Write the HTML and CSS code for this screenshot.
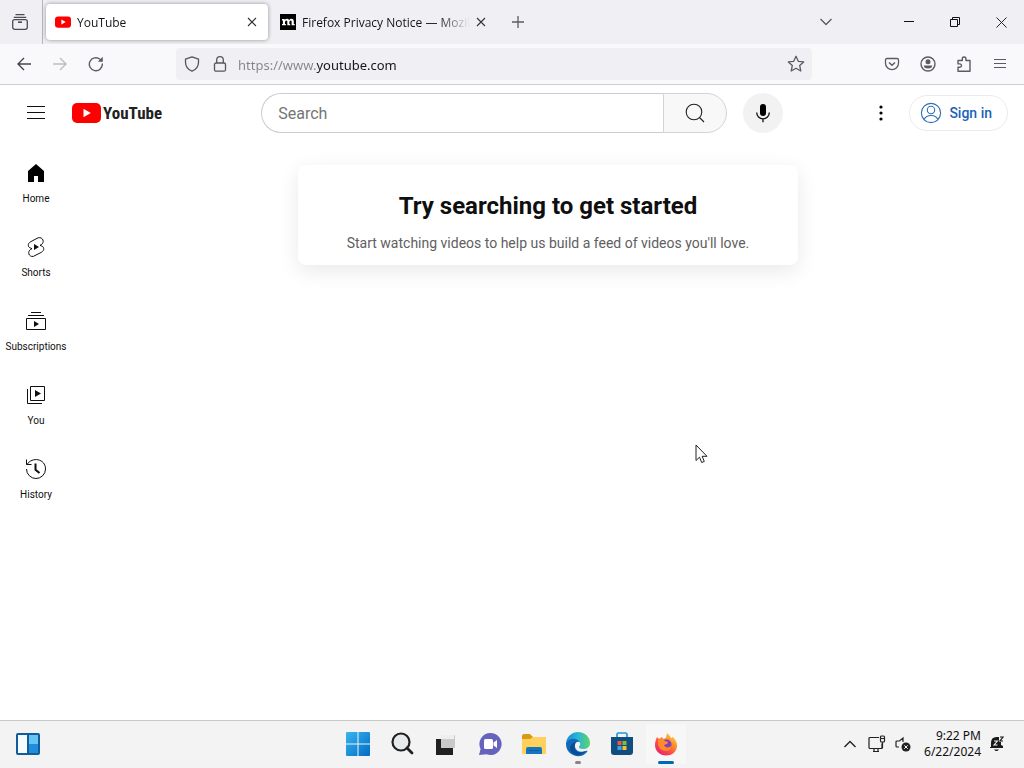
FILE: index.html
```html
<!DOCTYPE html>
<html lang="en">
  <head>
    <title>YouTube</title>
    <meta charset="utf-8">
    <link rel="stylesheet" href="styles.css">
  </head>
  <body>
    <!-- browser tabs -->
    <div class="tabbar">
      <button class="view-btn" aria-label="Firefox View">
        <svg width="16" height="16" viewBox="0 0 16 16" fill="none" stroke="#4b4a57" stroke-width="1.3"><path d="M3.5 .7h9M1.8 3.3h12.4"/><rect x=".7" y="5.7" width="14.6" height="9.6" rx="2"/><path d="M6 8.2h4" stroke-width="1.6"/></svg>
      </button>
      <div class="tab tab-active">
        <svg width="16" height="16" viewBox="0 0 16 16"><rect y="2.4" width="16" height="11.4" rx="3" fill="#f00"/><path d="M6.4 5.6v5l4.3-2.5z" fill="#fff"/></svg>
        <span class="tab-title">YouTube</span>
        <button class="tab-close" aria-label="Close tab"><svg width="10" height="10" viewBox="0 0 10 10" stroke="#333" stroke-width="1.1"><path d="M1 1l8 8M9 1l-8 8"/></svg></button>
      </div>
      <div class="tab">
        <svg width="16" height="16" viewBox="0 0 16 16"><path d="M0 0h16v16H0z"/><path d="M2 5h2.7v1.1Q5.5 4.8 7 4.8q1.6 0 2.1 1.4.8-1.4 2.4-1.4 2.3 0 2.3 2.6v2.5h.9v1.4h-3.1V7.8q0-1.3-.9-1.3-1.3 0-1.3 1.8v1.6h.8v1.4H7.3V7.8q0-1.3-.9-1.3-1.4 0-1.4 1.8v1.6h.9v1.4H2V9.900h.9V6.400H2z" fill="#fff"/></svg>
        <span class="tab-title">Firefox Privacy Notice — Mozil</span>
        <button class="tab-close" aria-label="Close tab"><svg width="10" height="10" viewBox="0 0 10 10" stroke="#333" stroke-width="1.1"><path d="M1 1l8 8M9 1l-8 8"/></svg></button>
      </div>
      <button class="tool-btn" aria-label="New tab"><svg width="12" height="12" viewBox="0 0 12 12" stroke="#5b5b66" stroke-width="1.3"><path d="M6 0v12M0 6h12"/></svg></button>
      <div class="window-btns">
        <button class="list-tabs" aria-label="List all tabs"><svg width="12" height="12" viewBox="0 0 12 12" fill="none" stroke="#5b5b66" stroke-width="1.3"><path d="M.5 3L6 8.500 11.500 3"/></svg></button>
        <button aria-label="Minimize"><svg width="10" height="10" viewBox="0 0 10 10" stroke="#111"><path d="M0 4.500h10"/></svg></button>
        <button aria-label="Restore"><svg width="10" height="10" viewBox="0 0 10 10" fill="none" stroke="#111"><path d="M.5 2.500h7v7h-7zM2.500 2.500v-2h7v7h-2"/></svg></button>
        <button aria-label="Close window"><svg width="11" height="11" viewBox="0 0 11 11" stroke="#222"><path d="M.5.5l10 10M10.500.5l-10 10"/></svg></button>
      </div>
    </div>

    <!-- address bar -->
    <div class="toolbar">
      <button class="tool-btn" aria-label="Back"><svg width="16" height="16" viewBox="0 0 16 16" fill="none" stroke="#45444f" stroke-width="1.4"><path d="M15 8H2M8 2L2 8l6 6"/></svg></button>
      <button class="tool-btn" aria-label="Forward"><svg width="16" height="16" viewBox="0 0 16 16" fill="none" stroke="#bdbdc2" stroke-width="1.4"><path d="M1 8h13M8 2l6 6-6 6"/></svg></button>
      <button class="tool-btn" aria-label="Reload"><svg width="16" height="16" viewBox="0 0 16 16" fill="none" stroke="#5b5b66" stroke-width="1.4"><path d="M14.300 7.500a6.500 6.500 0 1 1-2.200-4.200L14 5"/><path d="M14.800.8v5H9.800z" fill="#5b5b66" stroke="none"/></svg></button>
      <div class="urlbar">
        <svg width="16" height="16" viewBox="0 0 16 16" fill="none" stroke="#55545f" stroke-width="1.3"><path d="M8 .8l6.500 2.400v3c0 4-2.500 7.300-6.500 9-4-1.700-6.500-5-6.500-9v-3z" stroke-linejoin="round"/></svg>
        <svg width="16" height="16" viewBox="0 0 16 16" fill="none" stroke="#55545f" stroke-width="1.3"><rect x="2.500" y="7" width="11" height="8.200" rx="1.500"/><path d="M4.700 7V4a3.300 3.300 0 0 1 6.600 0v3"/></svg>
        <input type="text" class="url" aria-label="Address" value="https://www.youtube.com">
        <svg width="18" height="18" viewBox="0 0 18 18" fill="none" stroke="#5b5b66" stroke-width="1.3" stroke-linejoin="round"><path d="M9 1.300l2.300 5 5.400.6-4 3.700 1.100 5.400L9 13.300 4.200 16l1.100-5.400-4-3.700 5.400-.6z"/></svg>
      </div>
      <div class="toolbar-end">
        <button class="tool-btn" aria-label="Pocket"><svg width="16" height="16" viewBox="0 0 16 16" fill="none" stroke="#5b5b66" stroke-width="1.3"><path d="M3 2.500h10q1.500 0 1.500 1.500v3.200a6.500 6.500 0 0 1-13 0V4Q1.500 2.500 3 2.500z"/><path d="M5 6.500L8 9.200 11 6.500" stroke-width="1.500"/></svg></button>
        <button class="tool-btn" aria-label="Account"><svg width="16" height="16" viewBox="0 0 16 16"><circle cx="8" cy="8" r="7" fill="none" stroke="#5b5b66" stroke-width="1.4"/><circle cx="8" cy="5.800" r="2.500" fill="#5b5b66"/><path d="M3.800 9.500h8.400q0 3-4.200 3t-4.200-3z" fill="#5b5b66"/></svg></button>
        <button class="tool-btn" aria-label="Extensions"><svg width="16" height="16" viewBox="0 0 16 16" fill="none" stroke="#5b5b66" stroke-width="1.400"><path d="M2 4.500h4.300V2.800a1.800 1.800 0 0 1 3.600 0v1.700H14v10.700H2v-3.900h1.800a1.700 1.700 0 0 0 0-3.400H2z" stroke-linejoin="round"/></svg></button>
        <button class="tool-btn" aria-label="Menu"><svg width="14" height="12" viewBox="0 0 14 12" stroke="#5b5b66" stroke-width="1.200"><path d="M1 1.500h12M1 5.500h12M1 9.500h12"/></svg></button>
      </div>
    </div>

    <!-- page header -->
    <header class="masthead">
      <div class="start">
        <button class="guide-btn" aria-label="Guide"><svg width="18" height="14" viewBox="0 0 18 14" stroke="#0f0f0f"><path d="M0 .5h18M0 6.500h18M0 12.500h18"/></svg></button>
        <a href="#" class="logo">
          <svg width="29" height="20" viewBox="0 0 29 20"><rect width="29" height="20" rx="5" fill="#f00"/><path d="M11.500 5.800v8.400l7.300-4.200z" fill="#fff"/></svg>
          <span>YouTube</span>
        </a>
      </div>
      <form class="center">
        <input type="text" class="search-box" placeholder="Search" aria-label="Search">
        <button type="button" class="search-btn" aria-label="Search"><svg width="20" height="20" viewBox="0 0 20 20" fill="none" stroke="#222" stroke-width="1.100"><circle cx="9" cy="9" r="7.800"/><path d="M14.500 14.500l4.500 4.500"/></svg></button>
        <button type="button" class="mic-btn" aria-label="Search with your voice"><svg width="24" height="24" viewBox="0 0 24 24"><rect x="9" y="3" width="6" height="12" rx="3"/><path d="M5.700 11.500a6.300 6.300 0 0 0 12.600 0M12 18v3.300" fill="none" stroke="#0f0f0f" stroke-width="1.300"/></svg></button>
      </form>
      <div class="end">
        <button class="more-btn" aria-label="Settings"><svg width="24" height="24" viewBox="0 0 24 24"><circle cx="12" cy="6" r="1.600"/><circle cx="12" cy="12" r="1.600"/><circle cx="12" cy="18" r="1.600"/></svg></button>
        <a href="#" class="signin">
          <svg width="24" height="24" viewBox="0 0 24 24" fill="none" stroke="#2b6cb8" stroke-width="1.100"><circle cx="12" cy="12" r="9.600"/><circle cx="12" cy="9" r="3.700"/><path d="M5.200 18.700q1.300-4.200 6.800-4.200t6.800 4.200"/></svg>
          <span>Sign in</span>
        </a>
      </div>
    </header>

    <div class="content">
      <nav class="guide">
        <a href="#"><svg width="24" height="24" viewBox="0 0 24 24"><path d="M4 10v11h6v-6h4v6h6V10l-8-7z"/></svg><span>Home</span></a>
        <a href="#"><svg width="24" height="24" viewBox="0 0 24 24" fill="none" stroke="#0f0f0f"><path d="M14.100 2.800L6.700 6.700C3.300 8.500 3.500 12.300 6.900 13.200L8 13.700 6.800 14.300C3.100 16.300 4.600 22.200 9.300 21.400L17.400 17.300C20.700 15.400 20.500 11.700 17.100 10.800L16 10.300 17.200 9.700C20.900 7.700 19.200 1.500 14.100 2.800z"/><path d="M10 9v6l5-3z" fill="#0f0f0f" stroke="none"/></svg><span>Shorts</span></a>
        <a href="#"><svg width="24" height="24" viewBox="0 0 24 24" fill="none" stroke="#0f0f0f"><path d="M7 3.500h10M4 6.500h16M2.500 9.500h19v11h-19z"/><path d="M10 12v6l5-3z" fill="#0f0f0f" stroke="none"/></svg><span>Subscriptions</span></a>
        <a href="#"><svg width="24" height="24" viewBox="0 0 24 24" fill="none" stroke="#0f0f0f"><path d="M6.500 3.500h14v14h-14zM3.500 6v14.500H18"/><path d="M11 7v7l6-3.500z" fill="#0f0f0f" stroke="none"/></svg><span>You</span></a>
        <a href="#"><svg width="24" height="24" viewBox="0 0 24 24" fill="none" stroke="#0f0f0f"><path d="M2.500 2.500v5h5M3 7.500C8-.5 21.500 1.500 21.500 12A9.500 9.500 0 0 1 2.500 12"/><path d="M11.500 6.500v6.300l4 3.200" stroke-width="2"/></svg><span>History</span></a>
      </nav>
      <main>
        <div class="card">
          <h1>Try searching to get started</h1>
          <p>Start watching videos to help us build a feed of videos you'll love.</p>
        </div>
      </main>
    </div>

    <!-- windows taskbar -->
    <footer class="taskbar">
      <div class="task-start">
        <button aria-label="Widgets"><svg width="24" height="22" viewBox="0 0 24 22"><rect width="24" height="22" rx="2" fill="#105d9b"/><path d="M2 2h9v18H2z" fill="#f5fbff"/><path d="M13 2h9v9h-9z" fill="#65c5f3"/><path d="M13 11h9v9h-9z" fill="#218cdb"/></svg></button>
      </div>
      <div class="task-apps">
        <button aria-label="Start"><svg width="24" height="24" viewBox="0 0 24 24"><defs><linearGradient id="win" x2="1" y2="1"><stop stop-color="#38b6ef"/><stop offset="1" stop-color="#006bc5"/></linearGradient></defs><path d="M1 0h10.500v11.500H0V1q0-1 1-1zM12.500 0H23q1 0 1 1v10.500H12.500zM0 12.500h11.500V24H1q-1 0-1-1zM12.500 12.500H24V23q0 1-1 1H12.500z" fill="url(#win)"/></svg></button>
        <button aria-label="Search Windows"><svg width="24" height="24" viewBox="0 0 24 24"><circle cx="11" cy="10" r="8.500" fill="#e6eaec" stroke="#202020" stroke-width="2.200"/><path d="M17 16l5 5" stroke="#202020" stroke-width="2.800" stroke-linecap="round"/></svg></button>
        <button aria-label="Task view"><svg width="24" height="24" viewBox="0 0 24 24"><path d="M2 7h17v16H2z" fill="#202020"/><path d="M7 3h13q1 0 1 1v12H7z" fill="#c9c9c9"/><path d="M7 3h13v4H7z" fill="#eee"/></svg></button>
        <button aria-label="Chat"><svg width="24" height="24" viewBox="0 0 24 24"><path d="M12.500 1a11 11 0 1 1-4 21.200L1 23l1.600-6A11 11 0 0 1 12.500 1z" fill="#6463bd"/><rect x="6" y="7" width="9" height="10" rx="1.500" fill="#fff"/><path d="M15.500 10.500L19 8v8l-3.500-2.500z" fill="#fff"/></svg></button>
        <button aria-label="File Explorer"><svg width="26" height="24" viewBox="0 0 26 24"><path d="M1 4q0-2 2-2h6l3 3h12q1 0 1 1v3H1z" fill="#d99b14"/><path d="M1 7h8l3-2h12q1 0 1 1v16H2q-1 0-1-1z" fill="#ffd05b"/><path d="M5 22v-5q0-2 2-2h12q2 0 2 2v5z" fill="#1375bd"/><path d="M8 18h10v1H8z" fill="#0c5b9a"/></svg></button>
        <button class="open" aria-label="Edge"><svg width="26" height="26" viewBox="0 0 26 26"><defs><linearGradient id="edge" x2="1"><stop stop-color="#158cd6"/><stop offset=".5" stop-color="#29b8d3"/><stop offset="1" stop-color="#5dd56a"/></linearGradient></defs><path d="M1 12C2 5 7 1 13 1c7 0 12 5 12 11 0 4-3 6-7 6-3 0-4-1-4-2 0-1 2-2 1-4C13 7 4 7 1 12z" fill="url(#edge)"/><path d="M1 12C4 6 13 7 15 11c-4-1-6 2-5 5 1 4 5 6 11 4 1-.5 2-.5 1 1-6 8-21 4-21-8z" fill="#116ab8"/><path d="M10 14c-2 7 4 9 11 6-5 6-15 5-16-2 0-4 3-7 7-7-1 0-2 1-2 3z" fill="#0b4d94"/></svg></button>
        <button aria-label="Microsoft Store"><svg width="24" height="24" viewBox="0 0 24 24"><path d="M7 6V2.500Q7 1 8.500 1h7Q17 1 17 2.500V6" fill="none" stroke="#2295dc" stroke-width="1.700"/><path d="M1 5h22v15q0 3-3 3H4q-3 0-3-3z" fill="#124d80"/><path d="M7.500 9h4v4h-4z" fill="#f15838"/><path d="M12.500 9h4v4h-4z" fill="#80bd36"/><path d="M7.500 14h4v4h-4z" fill="#35a8e8"/><path d="M12.500 14h4v4h-4z" fill="#fdbd2c"/></svg></button>
        <button class="current" aria-label="Firefox"><svg width="24" height="24" viewBox="0 0 24 24"><defs><linearGradient id="fox" x1="1" y1="0" x2=".2" y2="1"><stop stop-color="#fff14c"/><stop offset=".35" stop-color="#ff9b2c"/><stop offset=".7" stop-color="#ff4648"/><stop offset="1" stop-color="#df2278"/></linearGradient></defs><path d="M3 5l2 2 3-2 1 2 3-1 1-5 3 3 1 2 2-1c3 3 4.500 6 4 10-1 5-5 8.500-11 8.500S1 19 1 13c0-3 1-6 2-8z" fill="url(#fox)"/><circle cx="12.500" cy="12.500" r="5" fill="#8040bd"/><path d="M4 8c3-2 5-1 7 1l3 1c0 2-2 2-4 3 1 3 5 3 7 1 0 4-3 5-5 5-5 0-8-4-8-8z" fill="#ff8c28"/></svg></button>
      </div>
      <div class="task-end">
        <button aria-label="Show hidden icons"><svg width="12" height="12" viewBox="0 0 12 12" fill="none" stroke="#222" stroke-width="1.400"><path d="M.5 9L6 3.500 11.500 9"/></svg></button>
        <button aria-label="Network"><svg width="18" height="18" viewBox="0 0 18 18" fill="none" stroke="#222" stroke-width="1.200"><path d="M11 2.500H2q-1 0-1 1v9q0 1 1 1h12v-5M5 16.500h6M6 13.500v3M10 13.500v3"/><rect x="12.500" y="1" width="4" height="6" rx="1"/><path d="M12.500 3.500h4M14.500 7v6"/></svg></button>
        <button aria-label="Volume"><svg width="18" height="18" viewBox="0 0 18 18"><path d="M9 7V3L5.500 6H3Q2 6 2 7v4q0 1 1 1h2" fill="none" stroke="#222" stroke-width="1.200"/><circle cx="12" cy="12" r="4.500" fill="#222"/><path d="M10.300 10.300l3.400 3.400M13.700 10.300l-3.400 3.400" stroke="#fff"/></svg></button>
        <button class="clock"><span>9:22 PM</span><span>6/22/2024</span></button>
        <button aria-label="Notifications"><svg width="16" height="18" viewBox="0 0 16 18"><path d="M2 12V8q0-6 5.500-6H12v8l2 1v2H1v-1zM5 14.500h5q-2.500 3-5 0z" fill="#181818"/><path d="M5 6h3.500L5 10h3.500" fill="none" stroke="#f2f3f5" stroke-width="1.100"/><path d="M10 1h5v6h-5z" fill="#f3f3f3"/><path d="M11 2h3l-3 4h3" fill="none" stroke="#181818" stroke-width="1.200"/></svg></button>
      </div>
    </footer>

    <svg class="pointer" width="13" height="20" viewBox="0 0 13 20"><path d="M1 1v15.500l3.500-3.300 2.200 5.300 2.600-1.100-2.200-5.100H12z" fill="#fff" stroke="#222"/></svg>
  </body>
</html>
```
FILE: styles.css
```css
* {
  box-sizing: border-box;
}

body {
  margin: 0;
  min-height: 100vh;
  display: flex;
  flex-direction: column;
  background: #fff;
  color: #0f0f0f;
  font-family: Roboto, sans-serif;
}

button {
  display: flex;
  align-items: center;
  justify-content: center;
  padding: 0;
  border: 0;
  background: none;
  color: inherit;
  font: inherit;
}

svg {
  flex: none;
}

a {
  color: inherit;
  text-decoration: none;
}

/* tabs */
.tabbar {
  display: flex;
  align-items: center;
  height: 44px;
  background: #f0f0f4;
  font-family: "Open Sans", "Noto Sans", sans-serif;
  font-size: 12px;
}

.view-btn {
  width: 43px;
  height: 44px;
  padding-right: 2px;
  margin-right: 3px;
  border-right: 1px solid #b5b5bd;
}

.tab {
  display: flex;
  align-items: center;
  height: 36px;
  margin-right: 10px;
  padding: 0 0 0 8px;
  gap: 6px;
  border-radius: 4px;
  color: #15141a;
}

.tab-active {
  flex: 0 1 222px;
  margin-right: 4px;
  padding: 0 7px 0 9px;
  background: #fff;
  box-shadow: 0 0 4px rgba(0, 0, 0, 0.4);
}

.tab-title {
  flex: 1;
  white-space: nowrap;
  mask-image: linear-gradient(to left, transparent, #000 32px);
}

.tab-close {
  width: 18px;
  height: 24px;
  margin-left: -4px;
}

.tool-btn {
  width: 36px;
  height: 32px;
}

.window-btns {
  display: flex;
  margin-left: auto;
}

.window-btns button {
  width: 46px;
  height: 44px;
}

.window-btns .list-tabs {
  margin-right: 37px;
}

/* toolbar */
.toolbar {
  display: flex;
  align-items: center;
  height: 41px;
  padding: 0 6px;
  background: #f9f9fb;
  border-bottom: 1px solid #ccccd1;
}

.urlbar {
  flex: 1;
  display: flex;
  align-items: center;
  gap: 12px;
  height: 32px;
  margin-left: 62px;
  padding: 0 7px 0 8px;
  border-radius: 4px;
  background: #f0f0f4;
}

.url {
  flex: 1;
  min-width: 0;
  margin-left: -2px;
  padding: 2px 0 0;
  border: 0;
  outline: 0;
  font-family: "Noto Sans", sans-serif;
  font-size: 13px;
  color: transparent;
  /* the host name is darker than the scheme */
  background: linear-gradient(to right, #85848d 78px, #15141a 78px);
  background-clip: text;
}

.toolbar-end {
  display: flex;
  margin-left: 62px;
}

/* youtube header */
.masthead {
  display: flex;
  align-items: center;
  justify-content: space-between;
  height: 56px;
  padding: 0 16px;
}

.start {
  display: flex;
  align-items: center;
  gap: 16px;
  width: 167px;
}

.guide-btn {
  width: 40px;
  height: 40px;
}

.logo {
  display: flex;
  align-items: center;
  gap: 2px;
  font-family: "Liberation Sans Narrow", "Roboto Condensed", Roboto, sans-serif;
  font-size: 17px;
  font-weight: bold;
  color: #212121;
}

.center {
  display: flex;
  flex: 0 1 522px;
}

.search-box {
  flex: 1;
  min-width: 0;
  height: 40px;
  padding: 0 16px;
  border: 1px solid #ccc;
  border-right: 0;
  border-radius: 20px 0 0 20px;
  font-family: Roboto, sans-serif;
  font-size: 16px;
}

.search-box::placeholder {
  color: #757575;
  opacity: 1;
}

.search-btn {
  width: 64px;
  height: 40px;
  border: 1px solid #d3d3d3;
  border-radius: 0 20px 20px 0;
  background: #f8f8f8;
}

.mic-btn {
  width: 40px;
  height: 40px;
  margin-left: 16px;
  border-radius: 50%;
  background: #f2f2f2;
}

.end {
  display: flex;
  align-items: center;
  gap: 8px;
}

.more-btn {
  width: 40px;
  height: 40px;
}

.signin {
  display: flex;
  align-items: center;
  gap: 6px;
  height: 36px;
  padding: 0 15px 0 9px;
  border: 1px solid #ebebeb;
  border-radius: 18px;
  color: #1c62b9;
  font-size: 14px;
  font-weight: 500;
}

/* page body */
.content {
  flex: 1;
  display: flex;
}

.guide {
  width: 72px;
  padding-top: 4px;
}

.guide a {
  display: flex;
  flex-direction: column;
  align-items: center;
  gap: 7px;
  padding: 16px 0 13px;
  font-size: 10px;
  line-height: 14px;
}

main {
  flex: 1;
  padding-top: 24px;
}

.card {
  max-width: 500px;
  margin: 0 auto;
  padding: 24px 24px 12px;
  border-radius: 8px;
  text-align: center;
  box-shadow: 0 6px 22px rgba(0, 0, 0, 0.09);
}

h1 {
  margin: 0 0 10px;
  font-size: 24px;
  line-height: 34px;
}

.card p {
  margin: 0;
  font-size: 14px;
  line-height: 20px;
  color: #606060;
}

/* taskbar */
.taskbar {
  display: grid;
  grid-template-columns: 1fr auto 1fr;
  align-items: center;
  height: 48px;
  padding-bottom: 2px;
  border-top: 1px solid #c8c8c8;
  background: #f3f3f3;
}

.task-start {
  padding-left: 8px;
}

.task-start button {
  width: 40px;
  height: 40px;
}

.task-apps {
  display: flex;
  gap: 4px;
}

.task-apps button {
  position: relative;
  width: 40px;
  height: 40px;
  border-radius: 4px;
}

.task-apps .current {
  background: #f7f7f7;
}

.open::after,
.current::after {
  content: "";
  position: absolute;
  bottom: 0;
  width: 6px;
  height: 3px;
  border-radius: 2px;
  background: #868686;
}

.current::after {
  width: 16px;
  background: #0067c0;
}

.task-end {
  display: flex;
  align-items: center;
  justify-content: flex-end;
  gap: 8px;
  padding-right: 19px;
  font-family: "Noto Sans", sans-serif;
  font-size: 12px;
  line-height: 16px;
}

.task-end button:first-child {
  margin-right: 4px;
}

.clock {
  flex-direction: column;
  align-items: flex-end;
  margin-left: 4px;
}

.pointer {
  position: absolute;
  left: 695px;
  top: 444px;
}
```
